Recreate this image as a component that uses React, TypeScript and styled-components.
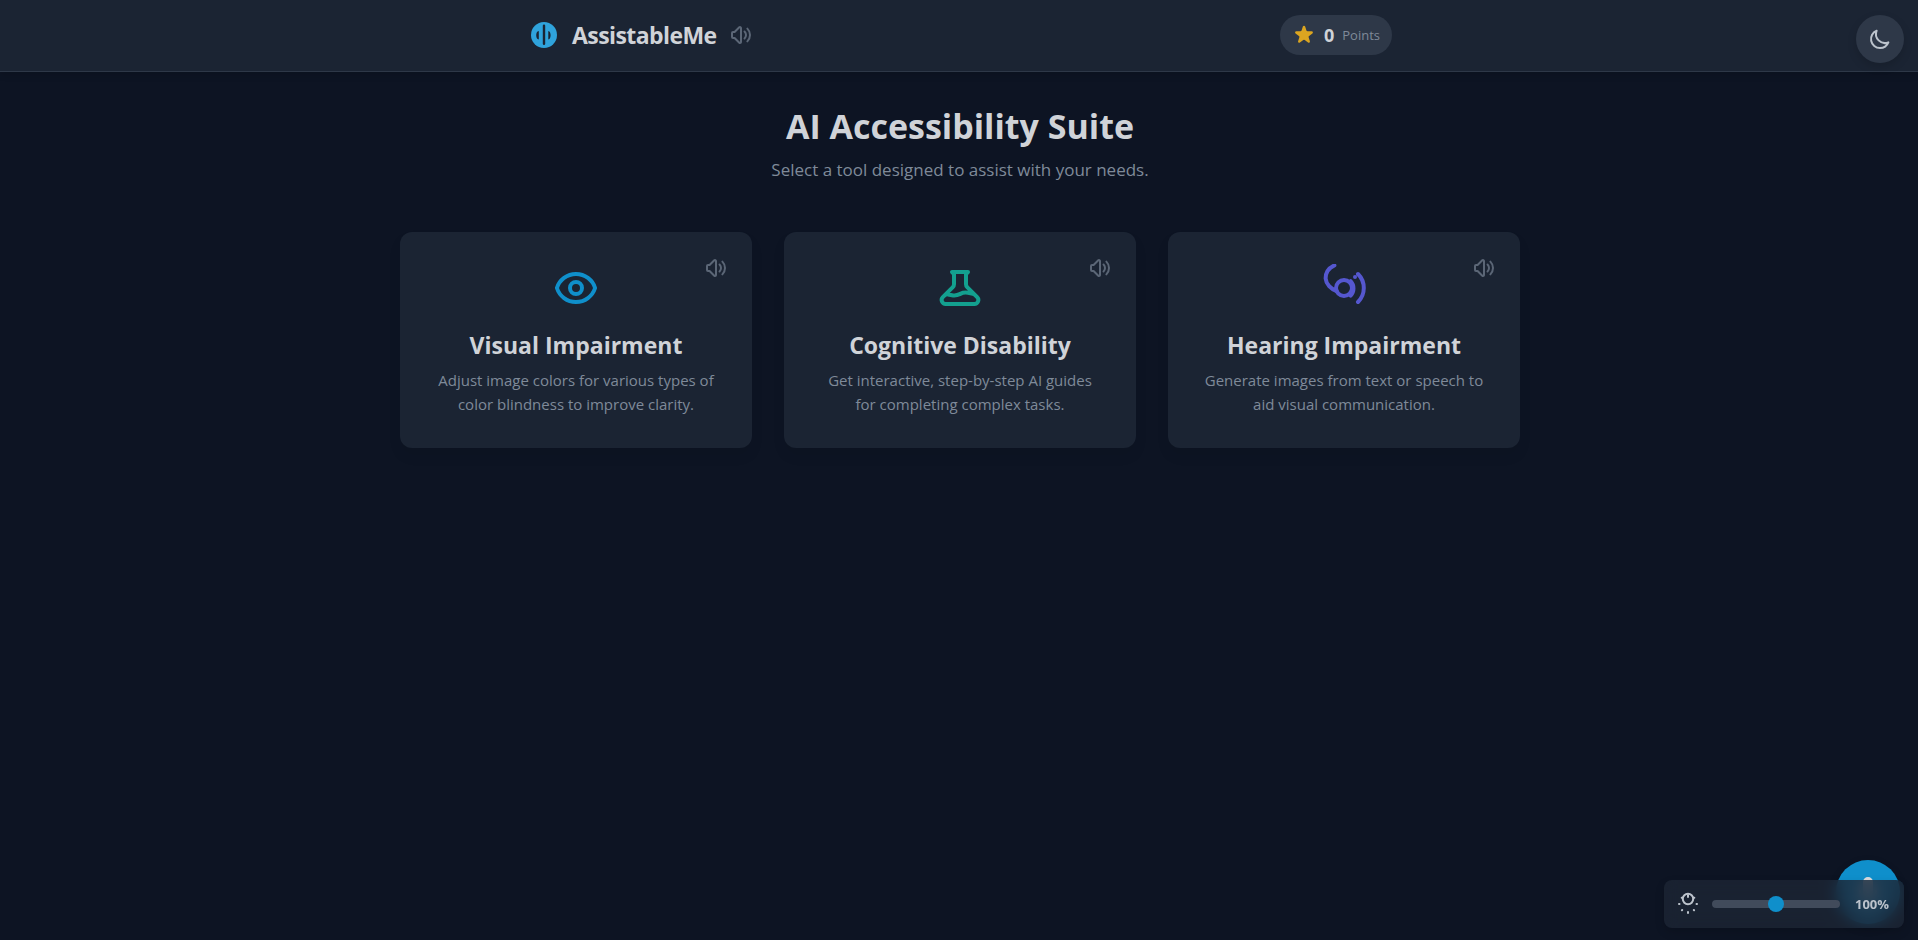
import React, { useState } from "react";
import styled, { createGlobalStyle } from "styled-components";

const GlobalStyle = createGlobalStyle`
  *, *::before, *::after { box-sizing: border-box; }
  body {
    margin: 0;
    background: #0d1423;
    color: #d0d3d8;
    font-family: "Segoe UI", "Open Sans", sans-serif;
    font-size: 15px;
    line-height: 24px;
  }
  h1, h2, p { margin: 0; }
  button { font: inherit; border: 0; cursor: pointer; }
`;

const Header = styled.header`
  background: #1b2433;
  border-bottom: 1px solid #2e3848;
  padding: 15px 0 16px;
  box-shadow: 0 4px 6px rgba(0, 0, 0, 0.1);
`;

const HeaderInner = styled.div`
  max-width: 898px;
  margin: 0 auto;
  padding: 0 16px 0 18px;
  display: flex;
  align-items: center;
  justify-content: space-between;
`;

const Brand = styled.div`
  display: flex;
  align-items: center;
  gap: 4px;
`;

const BrandLink = styled.a`
  display: flex;
  align-items: center;
  gap: 12px;
  color: inherit;
  text-decoration: none;
`;

const BrandName = styled.span`
  font-size: 23px;
  line-height: 32px;
  font-weight: 700;
  letter-spacing: -0.025em;
`;

const SpeakButton = styled.button`
  display: flex;
  padding: 8px;
  background: none;
  color: #5b6676;
  border-radius: 50%;
`;

const Points = styled.div`
  display: flex;
  align-items: center;
  gap: 8px;
  height: 40px;
  padding: 0 12px;
  border-radius: 20px;
  background: #2e3848;
`;

const PointsValue = styled.span`
  font-size: 18px;
  font-weight: 700;
`;

const PointsLabel = styled.span`
  font-size: 13px;
  color: #7f8a99;
`;

const ThemeButton = styled.button`
  position: fixed;
  top: 15px;
  right: 14px;
  width: 48px;
  height: 48px;
  display: grid;
  place-items: center;
  padding: 0;
  border-radius: 50%;
  background: #2e3848;
  color: #bcc3cc;
  box-shadow: 0 4px 10px rgba(0, 0, 0, 0.15);
`;

const Main = styled.main`
  max-width: 1154px;
  margin: 0 auto;
  padding: 32px 16px 32px 18px;
`;

const Intro = styled.div`
  text-align: center;
  margin-bottom: 48px;
`;

const Title = styled.h1`
  font-size: 34px;
  line-height: 44px;
  font-weight: 700;
`;

const Subtitle = styled.p`
  margin-top: 8px;
  font-size: 17px;
  line-height: 28px;
  color: #7f8a99;
`;

const Grid = styled.div`
  display: grid;
  grid-template-columns: repeat(auto-fit, minmax(288px, 1fr));
  gap: 32px;
`;

const Card = styled.article`
  position: relative;
  display: flex;
  flex-direction: column;
  align-items: center;
  padding: 32px;
  border-radius: 12px;
  background: #1b2433;
  text-align: center;
  box-shadow: 0 8px 14px rgba(0, 0, 0, 0.06);
`;

const CardSpeak = styled(SpeakButton)`
  position: absolute;
  top: 16px;
  right: 16px;
`;

const CardIcon = styled.div<{ $color: string }>`
  display: flex;
  margin-bottom: 16px;
  color: ${(p) => p.$color};
`;

const CardTitle = styled.h2`
  font-size: 23px;
  line-height: 34px;
  font-weight: 700;
  margin-bottom: 6px;
`;

const CardText = styled.p`
  padding: 0 2px;
  color: #7f8a99;
`;

const MicButton = styled.button`
  position: fixed;
  right: 18px;
  bottom: 16px;
  width: 64px;
  height: 64px;
  display: grid;
  place-items: center;
  padding: 0;
  border-radius: 50%;
  background: #0f8fcb;
  color: #d8dadd;
  box-shadow: 0 4px 10px rgba(0, 0, 0, 0.2);
`;

const BrightnessPanel = styled.label`
  position: fixed;
  right: 14px;
  bottom: 12px;
  height: 48px;
  display: flex;
  align-items: center;
  gap: 12px;
  padding: 0 12px;
  border-radius: 8px;
  background: rgba(29, 38, 53, 0.8);
  color: #bcc3cc;
  backdrop-filter: blur(8px);
  box-shadow: 0 4px 10px rgba(0, 0, 0, 0.15);
`;

const Slider = styled.input`
  appearance: none;
  width: 128px;
  height: 8px;
  margin: 0;
  border-radius: 4px;
  background: #414b5b;
  &::-webkit-slider-thumb {
    appearance: none;
    width: 16px;
    height: 16px;
    border-radius: 50%;
    background: #0f8fcb;
  }
`;

const Percent = styled.output`
  width: 40px;
  font-size: 13px;
  font-weight: 700;
  text-align: center;
`;

type OutlineProps = { size: number; children: React.ReactNode };

const Outline = ({ size, children }: OutlineProps) => (
  <svg
    width={size}
    height={size}
    viewBox="0 0 24 24"
    fill="none"
    stroke="currentColor"
    strokeWidth={2}
    strokeLinecap="round"
    strokeLinejoin="round"
    aria-hidden="true"
  >
    {children}
  </svg>
);

const SpeakerIcon = () => (
  <Outline size={24}>
    <path d="M15.536 8.464a5 5 0 010 7.072m2.828-9.900a9 9 0 010 12.728M5.586 15H4a1 1 0 01-1-1v-4a1 1 0 011-1h1.586l4.707-4.707C10.923 3.663 12 4.109 12 5v14c0 .891-1.077 1.337-1.707.707L5.586 15z" />
  </Outline>
);

const LogoIcon = () => (
  <svg width="32" height="32" viewBox="0 0 32 32" aria-hidden="true">
    <circle cx="16" cy="16" r="13" fill="#2fa3dc" />
    <g fill="#1b2433">
      <rect x="14.800" y="5.500" width="2.400" height="20.500" rx="1.200" />
      <path d="M10.800 12v8.500c-2-.500-2.600-2.400-2.600-4.250s.600-3.750 2.600-4.250zM20.300 12v8.500c1.700-.500 2.300-2.400 2.300-4.250s-.600-3.750-2.300-4.250z" />
    </g>
  </svg>
);

const cards = [
  {
    title: "Visual Impairment",
    text: "Adjust image colors for various types of color blindness to improve clarity.",
    color: "#0f8fcb",
    icon: (
      <>
        <circle cx="12" cy="12" r="3" />
        <path d="M2.458 12C3.732 7.943 7.523 5 12 5c4.478 0 8.268 2.943 9.542 7-1.274 4.057-5.064 7-9.542 7-4.477 0-8.268-2.943-9.542-7z" />
      </>
    ),
  },
  {
    title: "Cognitive Disability",
    text: "Get interactive, step-by-step AI guides for completing complex tasks.",
    color: "#13a08f",
    icon: (
      <path d="M19.428 15.428a2 2 0 00-1.022-.547l-2.387-.477a6 6 0 00-3.86.517l-.318.158a6 6 0 01-3.86.517L6.05 15.21a2 2 0 00-1.806.547M8 4h8l-1 1v5.172a2 2 0 00.586 1.414l5 5c1.26 1.26.367 3.414-1.415 3.414H4.828c-1.782 0-2.674-2.154-1.414-3.414l5-5A2 2 0 009 10.172V5L8 4z" />
    ),
  },
  {
    title: "Hearing Impairment",
    text: "Generate images from text or speech to aid visual communication.",
    color: "#5557cf",
    icon: (
      <>
        <circle cx="12" cy="12" r="4" />
        <path d="M7.200.700C4.300 2 2.800 4.500 2.800 7.200C3 10 5.500 12.500 8.300 13.500M15.300 8.600a5.250 5.250 0 0 1 0 7.200M17.500 6.500h.01M19 5a9.900 9.900 0 0 1 0 14" />
      </>
    ),
  },
];

export default function App() {
  const [level, setLevel] = useState(100);

  return (
    <>
      <GlobalStyle />
      <Header>
        <HeaderInner>
          <Brand>
            <BrandLink href="#">
              <LogoIcon />
              <BrandName>AssistableMe</BrandName>
            </BrandLink>
            <SpeakButton aria-label="Read AssistableMe aloud">
              <SpeakerIcon />
            </SpeakButton>
          </Brand>
          <Points>
            <svg width="24" height="24" viewBox="0 0 20 20" fill="#dba520" aria-hidden="true">
              <path d="M9.049 2.927c.3-.921 1.603-.921 1.902 0l1.070 3.292a1 1 0 00.950.690h3.462c.969 0 1.371 1.240.588 1.810l-2.800 2.034a1 1 0 00-.364 1.118l1.070 3.292c.300.921-.755 1.688-1.540 1.118l-2.800-2.034a1 1 0 00-1.175 0l-2.800 2.034c-.784.570-1.838-.197-1.539-1.118l1.070-3.292a1 1 0 00-.364-1.118L2.980 8.720c-.783-.570-.380-1.810.588-1.810h3.461a1 1 0 00.951-.690l1.070-3.292z" />
            </svg>
            <PointsValue>0</PointsValue>
            <PointsLabel>Points</PointsLabel>
          </Points>
        </HeaderInner>
      </Header>
      <ThemeButton aria-label="Switch theme">
        <Outline size={24}>
          <path d="M20.354 15.354A9 9 0 018.646 3.646 9.003 9.003 0 0012 21a9.003 9.003 0 008.354-5.646z" />
        </Outline>
      </ThemeButton>
      <Main>
        <Intro>
          <Title>AI Accessibility Suite</Title>
          <Subtitle>Select a tool designed to assist with your needs.</Subtitle>
        </Intro>
        <Grid>
          {cards.map((card) => (
            <Card key={card.title}>
              <CardSpeak aria-label={`Read ${card.title} aloud`}>
                <SpeakerIcon />
              </CardSpeak>
              <CardIcon $color={card.color}>
                <Outline size={48}>{card.icon}</Outline>
              </CardIcon>
              <CardTitle>{card.title}</CardTitle>
              <CardText>{card.text}</CardText>
            </Card>
          ))}
        </Grid>
      </Main>
      <MicButton aria-label="Voice command">
        <svg width="32" height="32" viewBox="0 0 24 24" fill="currentColor" aria-hidden="true">
          <path d="M8.250 4.500a3.750 3.750 0 1 1 7.500 0v8.250a3.750 3.750 0 1 1-7.500 0V4.500Z" />
          <path d="M6 10.500a.75.75 0 0 1 .75.75v1.500a5.250 5.250 0 1 0 10.500 0v-1.500a.75.75 0 0 1 1.500 0v1.500a6.751 6.751 0 0 1-6 6.709v2.291h3a.75.75 0 0 1 0 1.500h-7.500a.75.75 0 0 1 0-1.500h3v-2.291a6.751 6.751 0 0 1-6-6.709v-1.500A.75.75 0 0 1 6 10.500Z" />
        </svg>
      </MicButton>
      <BrightnessPanel>
        <Outline size={24}>
          <circle cx="12" cy="7" r="5.200" />
          <path d="M12 3v2M3 12h.500M20.500 12h.500M5.700 5.700h.01M18.300 5.700h.01M6.200 18l-.300.300M17.800 18l.300.300M12 20v1" />
        </Outline>
        <Slider
          type="range"
          min={50}
          max={150}
          value={level}
          aria-label="Brightness"
          onChange={(e) => setLevel(Number(e.target.value))}
        />
        <Percent>{level}%</Percent>
      </BrightnessPanel>
    </>
  );
}
